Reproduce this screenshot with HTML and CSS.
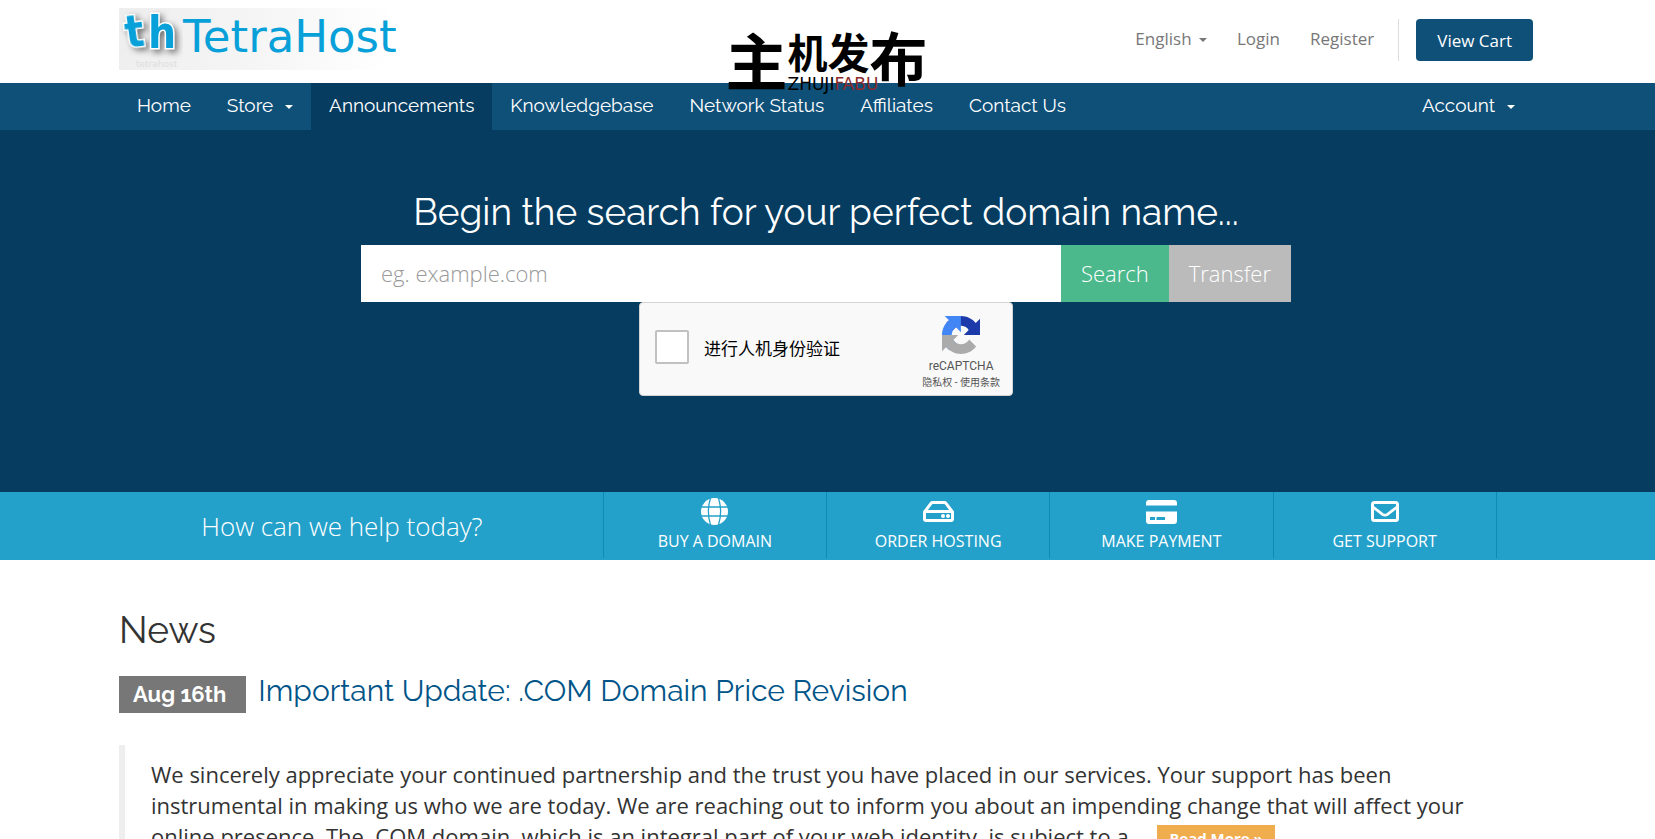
FILE: index.html
```html
<!DOCTYPE html>
<html lang="en">
<head>
  <meta charset="UTF-8">
  <meta name="viewport" content="width=device-width, initial-scale=1.0">
  <title>TetraHost</title>
  <link rel="stylesheet" href="styles.css">
</head>
<body>
  <header class="header">
    <div class="container header-row">
      <a class="logo" href="#">
        <svg class="logo-mark" width="64" height="62" viewBox="0 0 64 62" aria-hidden="true">
          <text class="mark-letter" x="6" y="39" transform="rotate(-8 14 25)">t</text>
          <text class="mark-letter mark-h" x="29" y="40">h</text>
          <text class="mark-name" x="17" y="59">tetrahost</text>
        </svg>
        <span class="logo-text">TetraHost</span>
      </a>
      <div class="top-nav">
        <a href="#">English <span class="caret"></span></a>
        <a href="#">Login</a>
        <a href="#">Register</a>
        <div class="cart-box"><a class="btn-cart" href="#">View Cart</a></div>
      </div>
    </div>
  </header>

  <!-- zhujifabu stamp, lies over the header and the menu -->
  <div class="stamp">
    <div class="stamp-cn"><span class="c1">主</span><span class="c2">机</span><span class="c3">发</span><span class="c4">布</span></div>
    <div class="stamp-en">ZHUJI<span>FABU</span></div>
  </div>

  <nav class="main-menu">
    <div class="container menu-row">
      <a href="#">Home</a>
      <a href="#">Store <span class="caret"></span></a>
      <a class="active" href="#">Announcements</a>
      <a href="#">Knowledgebase</a>
      <a href="#">Network Status</a>
      <a href="#">Affiliates</a>
      <a href="#">Contact Us</a>
      <a class="account" href="#">Account <span class="caret"></span></a>
    </div>
  </nav>

  <section class="banner">
    <h2>Begin the search for your perfect domain name...</h2>
    <form class="domain-form">
      <div class="input-group">
        <input class="domain-input" type="text" placeholder="eg. example.com" aria-label="Domain name">
        <button class="btn-search" type="button">Search</button>
        <button class="btn-transfer" type="button">Transfer</button>
      </div>
      <div class="captcha">
        <input class="captcha-check" type="checkbox" id="captcha">
        <label for="captcha">进行人机身份验证</label>
        <div class="captcha-brand">
          <svg width="38" height="38" viewBox="0 0 64 64" aria-hidden="true">
            <path fill="#1c3aa9" d="M64 31.955l-.033-1.37V4.687l-7.16 7.16C50.948 4.674 42.033.093 32.05.093c-10.4 0-19.622 4.96-25.458 12.64l11.736 11.86a15.55 15.55 0 0 1 4.754-5.334c2.05-1.6 4.952-2.906 8.968-2.906.485 0 .86.057 1.135.163 4.976.393 9.288 3.14 11.828 7.124l-8.307 8.307L64 31.953"/>
            <path fill="#4285f4" d="M31.862.094l-1.37.033H4.594l7.16 7.16C4.58 13.147 0 22.06 0 32.046c0 10.4 4.96 19.622 12.64 25.458L24.5 45.768a15.55 15.55 0 0 1-5.334-4.754c-1.6-2.05-2.906-4.952-2.906-8.968 0-.485.057-.86.163-1.135.393-4.976 3.14-9.288 7.124-11.828l8.307 8.307L31.86.095"/>
            <path fill="#ababab" d="M.001 32.045l.033 1.37v25.898l7.16-7.16c5.86 7.173 14.774 11.754 24.76 11.754 10.4 0 19.622-4.96 25.458-12.64l-11.736-11.86a15.55 15.55 0 0 1-4.754 5.334c-2.05 1.6-4.952 2.906-8.968 2.906-.485 0-.86-.057-1.135-.163-4.976-.393-9.288-3.14-11.828-7.124l8.307-8.307c-10.522.04-22.4.066-27.295-.005"/>
          </svg>
          <div class="captcha-name">reCAPTCHA</div>
          <div class="captcha-links"><a href="#">隐私权</a> - <a href="#">使用条款</a></div>
        </div>
      </div>
    </form>
  </section>

  <section class="shortcuts">
    <div class="container shortcut-row">
      <div class="shortcut-lead">How can we help today?</div>
      <a class="shortcut" href="#">
        <svg width="27" height="27" viewBox="0 0 27 27" aria-hidden="true">
          <circle cx="13.5" cy="13.5" r="13.5" fill="#fff"/>
          <path d="M0 9h27M0 18h27M9.500 0C7 8 7 19 9.500 27M17.500 0C20 8 20 19 17.500 27" fill="none" stroke="#24a1ca" stroke-width="1.300"/>
        </svg>
        <span>BUY A DOMAIN</span>
      </a>
      <a class="shortcut" href="#">
        <svg width="31" height="27" viewBox="0 0 31 27" aria-hidden="true">
          <path d="M1.500 14L8 5.300Q8.700 4.500 9.700 4.500H21.300Q22.300 4.500 23 5.300L29.500 14V21Q29.500 22.500 28 22.500H3Q1.500 22.500 1.500 21ZM1.500 13.500H29.500" fill="none" stroke="#fff" stroke-width="3" stroke-linejoin="round"/>
          <circle cx="20" cy="18" r="2" fill="#fff"/>
          <circle cx="25" cy="18" r="2" fill="#fff"/>
        </svg>
        <span>ORDER HOSTING</span>
      </a>
      <a class="shortcut" href="#">
        <svg width="31" height="27" viewBox="0 0 31 27" aria-hidden="true">
          <path fill="#fff" fill-rule="evenodd" d="M3 2H28Q31 2 31 5V7.500H0V5Q0 2 3 2ZM0 13.500H31V23Q31 26 28 26H3Q0 26 0 23ZM4 19V22H9V19ZM10.500 19V22H19V19Z"/>
        </svg>
        <span>MAKE PAYMENT</span>
      </a>
      <a class="shortcut" href="#">
        <svg width="28" height="27" viewBox="0 0 28 27" aria-hidden="true">
          <rect x="1.500" y="4.500" width="25" height="18" rx="2" fill="none" stroke="#fff" stroke-width="3"/>
          <path d="M2 9L11.500 16.300Q14 18 16.500 16.300L26 9" fill="none" stroke="#fff" stroke-width="2.700"/>
        </svg>
        <span>GET SUPPORT</span>
      </a>
      <div class="shortcut-end"></div>
    </div>
  </section>

  <main class="container news">
    <h2>News</h2>
    <article>
      <h3 class="news-title"><span class="date">Aug 16th</span><a href="#">Important Update: .COM Domain Price Revision</a></h3>
      <blockquote>
        <p>We sincerely appreciate your continued partnership and the trust you have placed in our services. Your support has been instrumental in making us who we are today. We are reaching out to inform you about an impending change that will affect your online presence. The .COM domain, which is an integral part of your web identity, is subject to a ... <a class="btn-more" href="#">Read More »</a></p>
      </blockquote>
    </article>
  </main>
</body>
</html>
```
FILE: styles.css
```css
* {
  box-sizing: border-box;
}
html {
  overflow-x: hidden;
}
body {
  margin: 0;
  background: #fff;
  color: #333;
  font-family: "Open Sans", "Noto Sans CJK SC", sans-serif;
  font-size: 17px;
}
a {
  text-decoration: none;
}
.container {
  max-width: 1417px;
  margin: 0 auto;
  padding-right: 3px;
}
.caret {
  display: inline-block;
  border-top: 4px solid;
  border-left: 4px solid transparent;
  border-right: 4px solid transparent;
  vertical-align: middle;
  margin-left: 3px;
}

/* Header */
.header-row {
  display: flex;
  justify-content: space-between;
  height: 83px;
  padding-top: 8px;
}
.logo {
  display: flex;
  width: 270px;
  height: 62px;
  background: linear-gradient(100deg, #eee, #f5f5f5 50%, #fff);
}
.logo-mark {
  flex: none;
}
.mark-letter {
  font: bold 44px "DejaVu Sans Condensed", "DejaVu Sans", sans-serif;
  fill: #08a0d8;
  stroke: #fff;
  stroke-width: 3px;
  paint-order: stroke;
  filter: drop-shadow(3px 3px 3px #777);
}
.mark-name {
  font: 9px "DejaVu Sans", sans-serif;
  fill: #ddd;
}
.logo-text {
  color: #08a0d8;
  font-family: "DejaVu Sans", sans-serif;
  font-size: 45px;
  line-height: 58px;
}
.top-nav {
  display: flex;
  gap: 30px;
  padding-top: 11px;
  line-height: 40px;
}
.top-nav > a {
  color: #777;
}
.cart-box {
  border-left: 1px solid #ddd;
  padding-left: 17px;
  height: 42px;
  margin-left: -6px;
}
.btn-cart {
  display: block;
  height: 42px;
  padding: 0 21px;
  border-radius: 4px;
  background: #0f5079;
  color: #fff;
  line-height: 43px;
}

/* Stamp */
.stamp {
  position: absolute;
  top: 25px;
  left: 0;
  right: 0;
  width: 204px;
  margin: 0 auto;
  color: #000;
  pointer-events: none;
}
.stamp-cn {
  display: flex;
  align-items: flex-start;
  font-family: "Noto Sans CJK SC", sans-serif;
  font-weight: bold;
}
.c1 { font-size: 62px; line-height: 68px; }
.c2 { font-size: 40px; line-height: 52px; }
.c3 { font-size: 42px; line-height: 52px; }
.c4 { font-size: 58px; line-height: 62px; }
.stamp-en {
  position: absolute;
  top: 51px;
  left: 62px;
  font: 17px/17px "DejaVu Sans", sans-serif;
}
.stamp-en span {
  color: #8b2a2a;
}

/* Menu */
.main-menu {
  background: #0f5079;
  font-family: Raleway, Lato, sans-serif;
  font-size: 19px;
}
.menu-row {
  display: flex;
}
.menu-row a {
  padding: 0 18px;
  color: #fff;
  line-height: 45px;
  height: 47px;
}
.menu-row a.active {
  background: #053c5f;
}
.menu-row .caret {
  margin-left: 7px;
}
.menu-row .account {
  margin-left: auto;
}

/* Domain search */
.banner {
  background: #053c5f;
  padding: 58px 23px 96px 20px;
}
.banner h2 {
  margin: 0;
  color: #fff;
  text-align: center;
  font: 400 37px/48px Raleway, Lato, sans-serif;
}
.domain-form {
  max-width: 930px;
  margin: 9px auto 0;
}
.input-group {
  display: flex;
  height: 57px;
}
.input-group input,
.input-group button {
  border: 0;
  border-radius: 0;
  font: 300 22px "Open Sans", sans-serif;
}
.domain-input {
  flex: 1;
  min-width: 0;
  padding: 0 20px 2px;
}
.domain-input::placeholder {
  color: #999;
}
.input-group button {
  padding: 0 20px 2px;
  color: #fff;
}
.input-group .btn-search {
  background: #4bb98c;
}
.input-group .btn-transfer {
  background: #bbb;
}
.captcha {
  display: flex;
  align-items: flex-start;
  width: 374px;
  height: 94px;
  margin: 0 auto;
  padding: 0 12px 0 15px;
  border: 1px solid #d3d3d3;
  border-radius: 4px;
  background: #f9f9f9;
  color: #000;
}
.captcha-check {
  appearance: none;
  width: 34px;
  height: 34px;
  margin: 27px 15px 0 0;
  border: 2px solid #c1c1c1;
  border-radius: 2px;
  background: #fff;
}
.captcha label {
  font: 17px/90px "Noto Sans CJK SC", sans-serif;
}
.captcha-brand {
  margin-left: auto;
  padding-top: 13px;
  text-align: center;
  color: #555;
}
.captcha-brand svg {
  display: block;
  margin: 0 auto;
}
.captcha-name {
  font: 12px/24px Roboto, sans-serif;
}
.captcha-links {
  font: 10px/10px Roboto, "Noto Sans CJK SC", sans-serif;
}
.captcha-links a {
  color: #555;
}

/* Shortcuts */
.shortcuts {
  background: #24a1ca;
  padding-bottom: 2px;
}
.shortcut-row {
  display: grid;
  grid-template-columns: 13fr 6fr 6fr 6fr 6fr 1fr;
  height: 66px;
}
.shortcut-lead {
  padding: 2px 38px 0 0;
  color: #fff;
  text-align: center;
  font-size: 26px;
  font-weight: 300;
  line-height: 64px;
}
.shortcut,
.shortcut-end {
  border-left: 1px solid #118ab3;
}
.shortcut {
  display: flex;
  flex-direction: column;
  align-items: center;
  padding-top: 6px;
  color: #fff;
  font-size: 16px;
  line-height: 32px;
}

/* News */
.news h2 {
  margin: 0;
  padding-top: 46px;
  font: 400 37px/48px Raleway, Lato, sans-serif;
}
.news-title {
  display: flex;
  gap: 12px;
  margin: 22px 0 32px;
  font: 400 30px/30px Raleway, Lato, sans-serif;
}
.news-title a {
  color: #058;
}
.date {
  padding: 0 20px 0 14px;
  background: #777;
  color: #fff;
  font-size: 22px;
  font-weight: bold;
  line-height: 36px;
  height: 37px;
}
blockquote {
  margin: 0;
  padding: 14px 26px;
  border-left: 6px solid #eee;
  font-size: 22px;
  line-height: 31px;
}
blockquote p {
  margin: 0;
}
.btn-more {
  display: inline-block;
  margin-top: 4px;
  padding: 0 12px;
  background: #f0ad4e;
  color: #fff;
  font-size: 15px;
  font-weight: bold;
  line-height: 26px;
  vertical-align: top;
}
```
